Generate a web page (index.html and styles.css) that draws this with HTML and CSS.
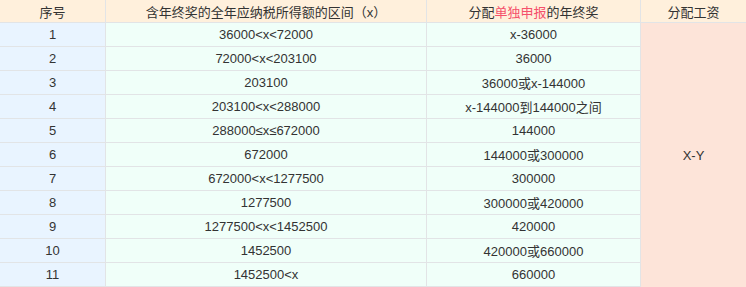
FILE: index.html
```html
<!DOCTYPE html>
<html lang="zh-CN">
<head>
<meta charset="utf-8">
<title>年终奖分配</title>
<link rel="stylesheet" href="styles.css">
</head>
<body>
<div class="table">
  <div class="cell head">序号</div>
  <div class="cell head">含年终奖的全年应纳税所得额的区间（x）</div>
  <div class="cell head">分配<span class="hl">单独申报</span>的年终奖</div>
  <div class="cell head last">分配工资</div>

  <div class="cell idx">1</div><div class="cell mid">36000&lt;x&lt;72000</div><div class="cell mid">x-36000</div>
  <div class="cell salary">X-Y</div>
  <div class="cell idx">2</div><div class="cell mid">72000&lt;x&lt;203100</div><div class="cell mid">36000</div>
  <div class="cell idx">3</div><div class="cell mid">203100</div><div class="cell mid">36000或x-144000</div>
  <div class="cell idx">4</div><div class="cell mid">203100&lt;x&lt;288000</div><div class="cell mid">x-144000到144000之间</div>
  <div class="cell idx">5</div><div class="cell mid">288000≤x≤672000</div><div class="cell mid">144000</div>
  <div class="cell idx">6</div><div class="cell mid">672000</div><div class="cell mid">144000或300000</div>
  <div class="cell idx">7</div><div class="cell mid">672000&lt;x&lt;1277500</div><div class="cell mid">300000</div>
  <div class="cell idx">8</div><div class="cell mid">1277500</div><div class="cell mid">300000或420000</div>
  <div class="cell idx">9</div><div class="cell mid">1277500&lt;x&lt;1452500</div><div class="cell mid">420000</div>
  <div class="cell idx">10</div><div class="cell mid">1452500</div><div class="cell mid">420000或660000</div>
  <div class="cell idx">11</div><div class="cell mid">1452500&lt;x</div><div class="cell mid">660000</div>
</div>
</body>
</html>
```
FILE: styles.css
```css
html, body {
  margin: 0;
  padding: 0;
  background: #ffffff;
}

.table {
  display: grid;
  grid-template-columns: 106px 321px 214px 105px;
  grid-template-rows: 23px repeat(11, 24px);
  width: 746px;
  font-family: "Liberation Sans", "Noto Sans CJK SC", sans-serif;
  font-size: 13px;
  color: #333333;
}

.cell {
  box-sizing: border-box;
  display: flex;
  align-items: center;
  justify-content: center;
  border-right: 1px solid #e2e4e6;
  border-bottom: 1px solid #e2e4e6;
  white-space: nowrap;
}

.head {
  background: #fff0dc;
}

.head.last {
  border-right: none;
}

.hl {
  color: #f5506b;
}

.idx {
  background: #e9f4ff;
}

.mid {
  background: #f0fff9;
}

.salary {
  grid-column: 4;
  grid-row: 2 / span 11;
  background: #fde4d9;
  border-right: none;
  border-bottom: none;
}
```
